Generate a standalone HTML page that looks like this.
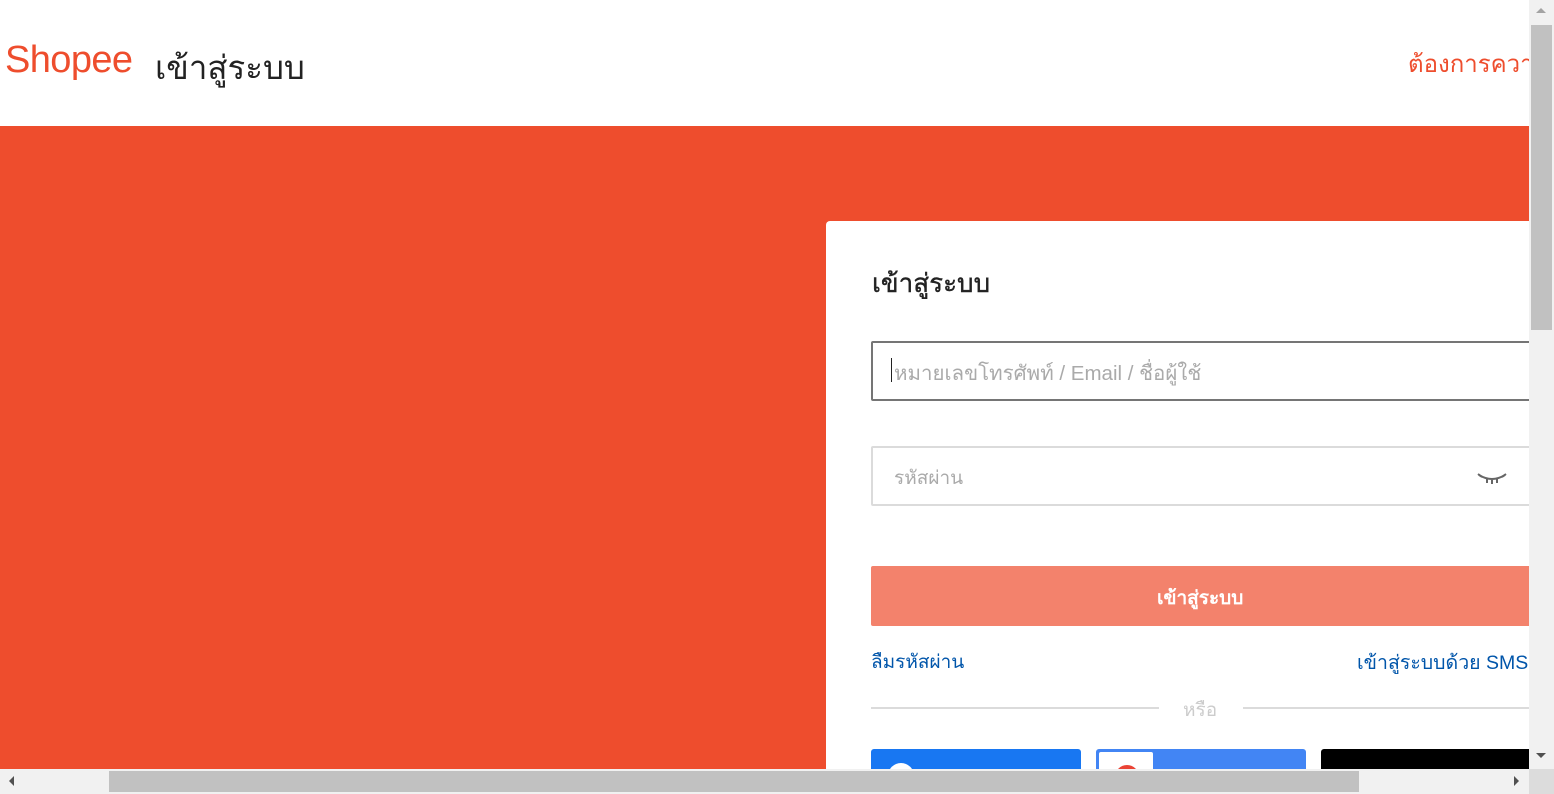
<!DOCTYPE html>
<html><head><meta charset="utf-8"><style>
*{box-sizing:border-box;margin:0;padding:0}
html,body{width:1554px;height:794px;overflow:hidden;background:#fff;font-family:"Liberation Sans","DejaVu Sans",sans-serif}
.abs{position:absolute}
</style></head><body>
<div class="abs" style="left:0;top:0;width:1529px;height:769px;overflow:hidden">
  <div class="abs" style="left:5px;top:39px;font-size:38px;color:#ee4d2d;letter-spacing:-0.6px">Shopee</div>
  <div class="abs" style="left:155px;top:41px;font-size:33px;color:#222;white-space:nowrap">เข้าสู่ระบบ</div>
  <div class="abs" style="left:1408px;top:44px;font-size:24px;color:#ee4d2d;white-space:nowrap">ต้องการความช่วยเหลือ?</div>
  <div class="abs" style="left:0;top:126px;width:1529px;height:643px;background:#ee4d2d"></div>
  <div class="abs" style="left:826px;top:221px;width:760px;height:600px;background:#fff;border-radius:4px">
    <div class="abs" style="left:46px;top:42px;font-size:26px;color:#222;-webkit-text-stroke:0.4px #222;white-space:nowrap">เข้าสู่ระบบ</div>
    <div class="abs" style="left:45px;top:120px;width:700px;height:60px;border:2px solid #757575;border-radius:2px"></div>
    <div class="abs" style="left:65px;top:137px;width:1px;height:24px;background:#222"></div>
    <div class="abs" style="left:68px;top:136px;font-size:20.5px;color:#aaa;white-space:nowrap">หมายเลขโทรศัพท์ / Email / ชื่อผู้ใช้</div>
    <div class="abs" style="left:45px;top:225px;width:700px;height:60px;border:2px solid #dbdbdb;border-radius:2px"></div>
    <div class="abs" style="left:68px;top:242px;font-size:19px;color:#aaa">รหัสผ่าน</div>
    <svg class="abs" style="left:650px;top:250px" width="32" height="16" viewBox="0 0 32 16"><g fill="none" stroke="#666" stroke-width="2"><path d="M3 4 Q16 12 29 4"/><path d="M2 3l4 3M30 3l-4 3M11 8v4M21 8v4M16 9v4"/></g></svg>
    <div class="abs" style="left:45px;top:345px;width:700px;height:60px;background:#f3826c;border-radius:2px"></div>
    <div class="abs" style="left:331px;top:362px;font-size:19px;color:#fff;font-weight:bold;white-space:nowrap">เข้าสู่ระบบ</div>
    <div class="abs" style="left:45px;top:426px;font-size:19px;color:#05a;white-space:nowrap">ลืมรหัสผ่าน</div>
    <div class="abs" style="left:531px;top:426px;font-size:19.5px;color:#05a;white-space:nowrap">เข้าสู่ระบบด้วย SMS</div>
    <div class="abs" style="left:45px;top:486px;width:288px;height:2px;background:#dbdbdb"></div>
    <div class="abs" style="left:417px;top:486px;width:330px;height:2px;background:#dbdbdb"></div>
    <div class="abs" style="left:357px;top:474px;font-size:19px;color:#ccc">หรือ</div>
    <div class="abs" style="left:45px;top:528px;width:210px;height:60px;background:#1877f2;border-radius:3px"></div>
    <div class="abs" style="left:62px;top:542px;width:26px;height:26px;border-radius:50%;background:#fff"></div>
    <div class="abs" style="left:270px;top:528px;width:210px;height:60px;background:#4285f4;border-radius:3px"></div>
    <div class="abs" style="left:273px;top:531px;width:54px;height:54px;background:#fff;border-radius:2px"></div>
    <div class="abs" style="left:289px;top:544px;width:24px;height:24px;border-radius:50%;border:4px solid #ea4335"></div>
    <div class="abs" style="left:495px;top:528px;width:250px;height:60px;background:#000;border-radius:3px"></div>
  </div>
</div>
<div class="abs" style="left:1529px;top:0;width:25px;height:769px;background:#f1f1f1"></div>
<div class="abs" style="left:1531px;top:25px;width:21px;height:305px;background:#c1c1c1"></div>
<div class="abs" style="left:1536px;top:8px;width:0;height:0;border-left:5px solid transparent;border-right:5px solid transparent;border-bottom:5px solid #a3a3a3"></div>
<div class="abs" style="left:1536px;top:753px;width:0;height:0;border-left:5px solid transparent;border-right:5px solid transparent;border-top:5px solid #505050"></div>
<div class="abs" style="left:0;top:769px;width:1529px;height:25px;background:#f1f1f1"></div>
<div class="abs" style="left:109px;top:771px;width:1250px;height:21px;background:#c1c1c1"></div>
<div class="abs" style="left:9px;top:776px;width:0;height:0;border-top:5px solid transparent;border-bottom:5px solid transparent;border-right:5px solid #505050"></div>
<div class="abs" style="left:1514px;top:776px;width:0;height:0;border-top:5px solid transparent;border-bottom:5px solid transparent;border-left:5px solid #505050"></div>
<div class="abs" style="left:1529px;top:769px;width:25px;height:25px;background:#dcdcdc"></div>
</body></html>
